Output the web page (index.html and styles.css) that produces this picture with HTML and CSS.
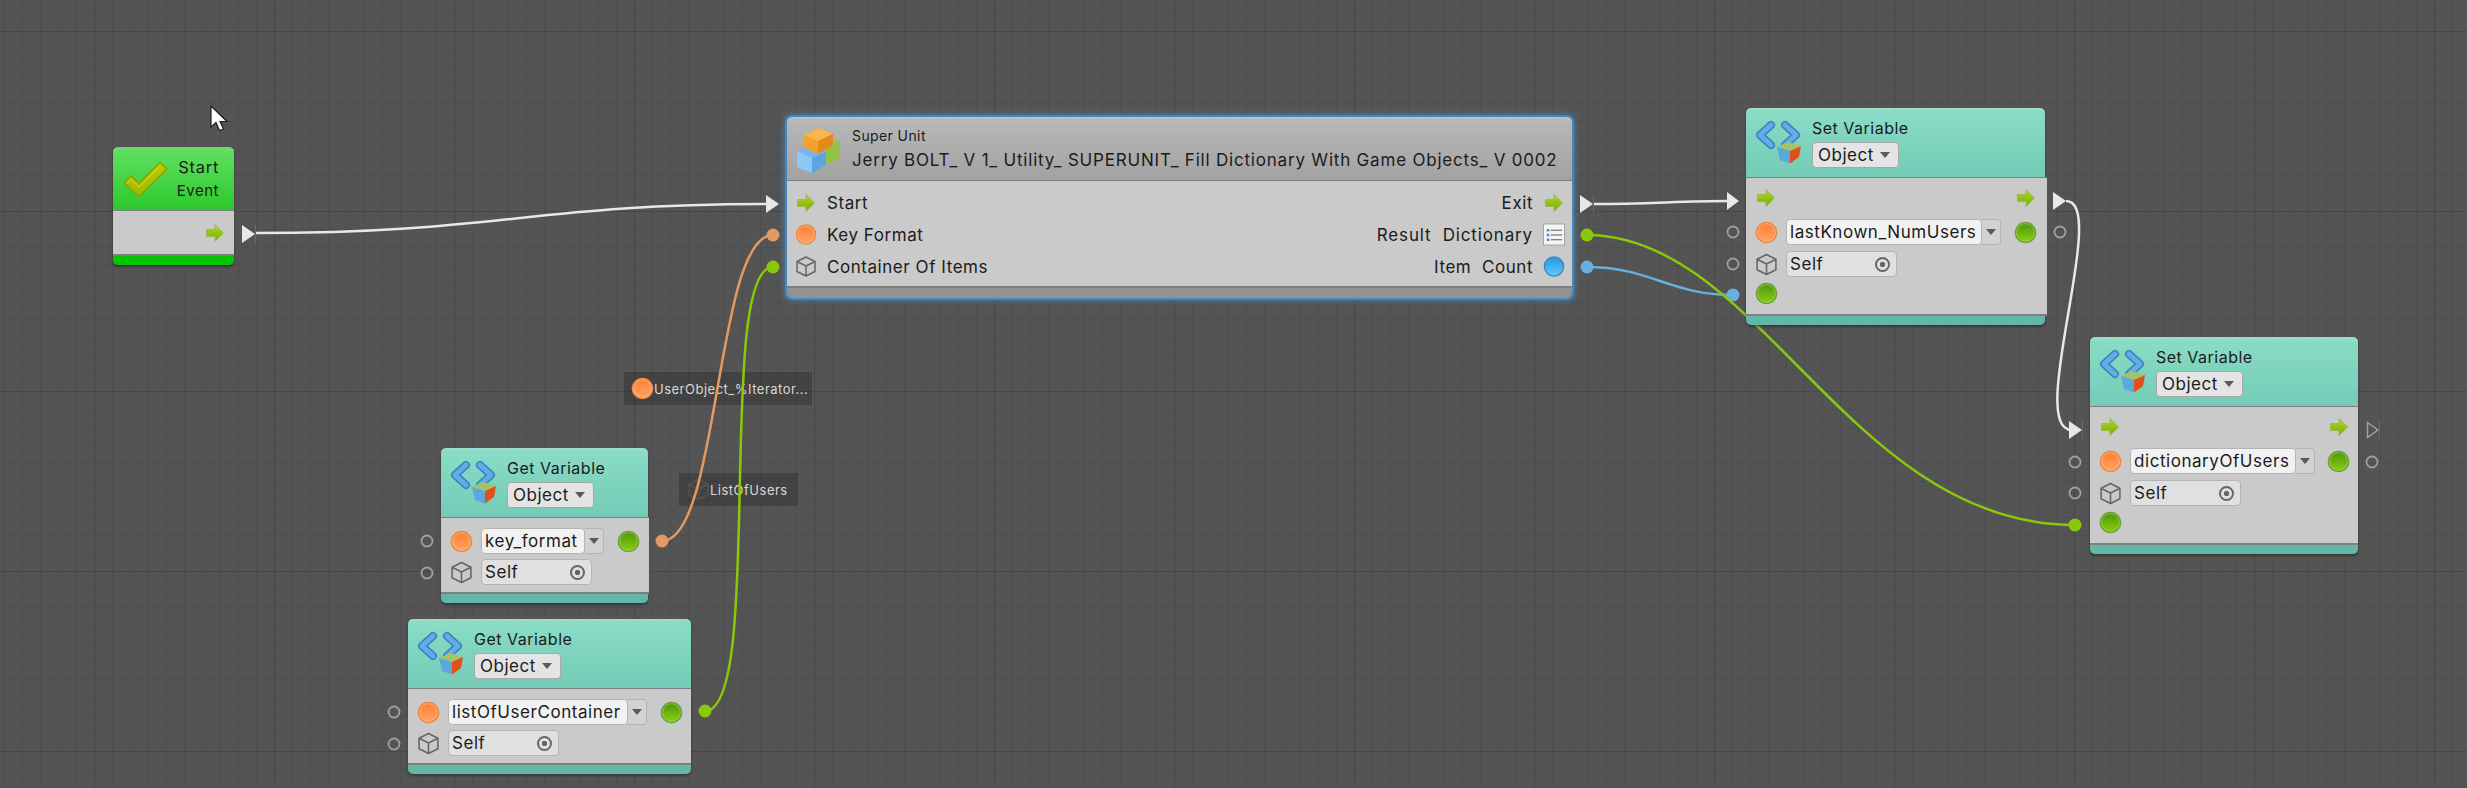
FILE: index.html
```html
<!DOCTYPE html>
<html lang="en">
<head>
    <meta charset="UTF-8">
    <title>Flow Graph</title>
    <link rel="stylesheet" href="styles.css">
</head>
<body>

<!-- shared icons -->
<svg class="defs" width="0" height="0">
    <defs>
        <linearGradient id="gFlow" x1="0" y1="0" x2="0" y2="1"><stop offset="0" stop-color="#b4d820"/><stop offset="1" stop-color="#76ac04"/></linearGradient>
        <linearGradient id="gOrange" x1="0" y1="0" x2="0" y2="1"><stop offset="0" stop-color="#ff7f30"/><stop offset="1" stop-color="#ffa468"/></linearGradient>
        <linearGradient id="gGreen" x1="0" y1="0" x2="0" y2="1"><stop offset="0" stop-color="#4c9406"/><stop offset="1" stop-color="#8ad018"/></linearGradient>
        <linearGradient id="gBlue" x1="0" y1="0" x2="0" y2="1"><stop offset="0" stop-color="#2196e6"/><stop offset="1" stop-color="#62ccff"/></linearGradient>
        <linearGradient id="gCheck" x1="0" y1="0" x2="0" y2="1"><stop offset="0" stop-color="#bccc00"/><stop offset="1" stop-color="#9cb800"/></linearGradient>
        <symbol id="flow" viewBox="0 0 20 20"><path d="M1.5 6.5H10V1.5L18.5 10L10 18.5V13.5H1.5Z" fill="url(#gFlow)" stroke="#9cb85c"/></symbol>
        <symbol id="orange" viewBox="0 0 24 24"><circle cx="12" cy="12" r="10.5" fill="url(#gOrange)" stroke="#e9883e" stroke-width="1.5"/><circle cx="12" cy="12" r="9.2" fill="none" stroke="#ffc79c" stroke-width=".6"/></symbol>
        <symbol id="green" viewBox="0 0 24 24"><circle cx="12" cy="12" r="10.5" fill="url(#gGreen)" stroke="#6f9f38" stroke-width="1.5"/><circle cx="12" cy="12" r="9.2" fill="none" stroke="#a6dc5c" stroke-width=".6"/></symbol>
        <symbol id="blue" viewBox="0 0 24 24"><circle cx="12" cy="12" r="10.5" fill="url(#gBlue)" stroke="#3a86bc" stroke-width="1.5"/></symbol>
        <symbol id="cube" viewBox="0 0 22 22"><path d="M11 1.5L20 6V16L11 20.5L2 16V6ZM2 6L11 10.5L20 6M11 10.5V20.5" fill="none" stroke="#666" stroke-width="1.5" stroke-linejoin="round"/></symbol>
        <symbol id="var" viewBox="0 0 46 44">
            <path d="M16 5L5 15L16 25M30 5L41 15L30 25" fill="none" stroke="#3a82c2" stroke-width="8" stroke-linejoin="round" stroke-linecap="round"/>
            <path d="M16 5L5 15L16 25M30 5L41 15L30 25" fill="none" stroke="#62ade6" stroke-width="5" stroke-linejoin="round" stroke-linecap="round"/>
            <path d="M22 27L33 22L46 26L35 31Z" fill="#a4c268"/>
            <path d="M22 27L35 31V43.5L25 40Z" fill="#5aa8dc"/>
            <path d="M35 31L46 26L44 37L35 43.5Z" fill="#e0501a"/>
        </symbol>
    </defs>
</svg>

<div class="canvas">

    <!-- inline value boxes, they sit under the wires -->
    <div class="inline-value inline-key">
        <svg class="ico ico-22"><use href="#orange"/></svg>
        <span class="inline-text">UserObject_%Iterator...</span>
    </div>
    <div class="inline-value inline-list">
        <svg class="ico ico-22 faded"><use href="#cube"/></svg>
        <span class="inline-text">ListOfUsers</span>
    </div>

    <!-- wires and connectors -->
    <svg class="wires" width="2467" height="788">
        <g fill="none" stroke-width="2.500">
            <path d="M255 233C500 233 530 204 770 204" stroke="#e8e8e8"/>
            <path d="M1593 204C1650 204 1680 201 1730 201" stroke="#e8e8e8"/>
            <path d="M2066 201C2110 201 2025 430 2072 430" stroke="#e8e8e8"/>
            <path d="M662 541C720 541 715 235 773 235" stroke="#e39a62"/>
            <path d="M705 711C765 711 715 267 773 267" stroke="#8ac80a"/>
            <path d="M1587 267C1650 267 1670 295 1733 295" stroke="#68aee0"/>
        </g>
        <g fill="#e39a62"><circle cx="773" cy="235" r="6.5"/><circle cx="662" cy="541" r="6.5"/></g>
        <circle cx="1733" cy="295" r="6.5" fill="#68aee0"/>
        <circle cx="1587" cy="267" r="6.5" fill="#68aee0"/>
        <path d="M1587 235C1760 235 1850 525 2075 525" fill="none" stroke="#8ac80a" stroke-width="2.500"/>
        <g fill="#8ac80a">
            <circle cx="773" cy="267" r="6.5"/><circle cx="705" cy="711" r="6.5"/>
            <circle cx="1587" cy="235" r="6.5"/><circle cx="2075" cy="525" r="6.5"/>
        </g>
        <g fill="#e8e8e8">
            <path d="M242 225L255 234L242 243Z"/>
            <path d="M766 195L779 204L766 213Z"/>
            <path d="M1580 195L1593 204L1580 213Z"/>
            <path d="M1727 192L1739 201L1727 210Z"/>
            <path d="M2053 192L2066 201L2053 210Z"/>
            <path d="M2069 421L2082 430L2069 439Z"/>
        </g>
        <path d="M255.500 225V243M1593.500 195V213M2082.500 421V439M2379.500 421V439" stroke="#6a6a6a" stroke-width="1"/>
        <path d="M2367.500 422.500L2378 430L2367.500 437.500Z" fill="none" stroke="#a0a0a0" stroke-width="1.500"/>
        <g fill="none" stroke="#a0a0a0" stroke-width="1.800">
            <circle cx="1733" cy="232" r="5.500"/><circle cx="1733" cy="264" r="5.500"/>
            <circle cx="2060" cy="232" r="5.500"/>
            <circle cx="2075" cy="462" r="5.500"/><circle cx="2075" cy="493" r="5.500"/>
            <circle cx="2372" cy="462" r="5.500"/>
            <circle cx="427" cy="541" r="5.500"/><circle cx="427" cy="573" r="5.500"/>
            <circle cx="394" cy="712" r="5.500"/><circle cx="394" cy="744" r="5.500"/>
        </g>
    </svg>

    <!-- Start event -->
    <div class="node node-start">
        <div class="head head-start">
            <svg class="check" viewBox="0 0 46 37">
                <path d="M2 22L9 15L17 22L38 1.500L45 8L17 35.500Z" fill="url(#gCheck)" stroke="#8ea000" stroke-width="1.500" stroke-linejoin="round"/>
                <path d="M5 22L9 18.500L17 26L38 5" fill="none" stroke="#d2dc40" stroke-width="1"/>
            </svg>
            <div class="start-titles">
                <div class="title title-start">Start</div>
                <div class="subtitle">Event</div>
            </div>
        </div>
        <div class="body body-start">
            <svg class="ico ico-flow"><use href="#flow"/></svg>
        </div>
        <div class="foot foot-start"></div>
    </div>

    <!-- Super unit -->
    <div class="node node-super">
        <div class="head head-super">
            <svg class="lego" viewBox="0 0 46 47">
                <path d="M30 16L45 13V31L30 38Z" fill="#94c244"/>
                <path d="M2 24L13 20L31 25V38L17 46L2 40Z" fill="#74b6ec"/>
                <path d="M17 31L31 25V38L17 46Z" fill="#5ea4de"/>
                <path d="M2 24L17 31V46L2 40Z" fill="#8cc8f4"/>
                <path d="M9 8L24 1L38 7L38 18L22 27L9 20Z" fill="#f2a030"/>
                <path d="M9 8L24 1L38 7L23 14Z" fill="#f8b64c"/>
                <path d="M23 14L38 7V18L23 27Z" fill="#e28a1c"/>
            </svg>
            <div class="super-titles">
                <div class="super-label">Super Unit</div>
                <div class="super-name">Jerry BOLT_ V 1_ Utility_ SUPERUNIT_ Fill Dictionary With Game Objects_ V 0002</div>
            </div>
        </div>
        <div class="body body-super">
            <div class="ports">
                <div class="port"><svg class="ico ico-flow"><use href="#flow"/></svg><span>Start</span></div>
                <div class="port"><svg class="ico ico-22"><use href="#orange"/></svg><span>Key Format</span></div>
                <div class="port"><svg class="ico ico-22"><use href="#cube"/></svg><span>Container Of Items</span></div>
            </div>
            <div class="ports ports-right">
                <div class="port"><span>Exit</span><svg class="ico ico-flow"><use href="#flow"/></svg></div>
                <div class="port"><span class="port-wide">Result&nbsp; Dictionary</span>
                    <svg class="ico ico-22" viewBox="0 0 23 23">
                        <rect x=".5" y=".5" width="22" height="22" fill="#f4f4f4" stroke="#a0a0a0"/>
                        <path d="M8 7H20M8 12H20M8 17H20" stroke="#555" stroke-width="1"/>
                        <path d="M4 7H6.500M4 12H6.500M4 17H6.500" stroke="#3f8fd8" stroke-width="2.500"/>
                    </svg>
                </div>
                <div class="port"><span>Item&nbsp; Count</span><svg class="ico ico-22"><use href="#blue"/></svg></div>
            </div>
        </div>
        <div class="foot foot-super"></div>
    </div>

    <!-- Set Variable, lastKnown_NumUsers -->
    <div class="node node-set1">
        <div class="head head-var">
            <svg class="var-icon"><use href="#var"/></svg>
            <div class="var-titles">
                <div class="title">Set Variable</div>
                <div class="pick">Object<i class="caret"></i></div>
            </div>
        </div>
        <div class="body body-var">
            <div class="row row-flow"><svg class="ico ico-flow"><use href="#flow"/></svg><svg class="ico ico-flow end"><use href="#flow"/></svg></div>
            <div class="row"><svg class="ico ico-22"><use href="#orange"/></svg>
                <div class="combo combo-last"><span class="combo-text">lastKnown_NumUsers</span><span class="combo-arrow"><i class="caret"></i></span></div>
                <svg class="ico ico-22 end"><use href="#green"/></svg></div>
            <div class="row"><svg class="ico ico-22"><use href="#cube"/></svg><div class="self">Self<i class="target"></i></div></div>
            <div class="row row-icon"><svg class="ico ico-22"><use href="#green"/></svg></div>
        </div>
        <div class="foot foot-var"></div>
    </div>

    <!-- Set Variable, dictionaryOfUsers -->
    <div class="node node-set2">
        <div class="head head-var">
            <svg class="var-icon"><use href="#var"/></svg>
            <div class="var-titles">
                <div class="title">Set Variable</div>
                <div class="pick">Object<i class="caret"></i></div>
            </div>
        </div>
        <div class="body body-var">
            <div class="row row-flow"><svg class="ico ico-flow"><use href="#flow"/></svg><svg class="ico ico-flow end"><use href="#flow"/></svg></div>
            <div class="row"><svg class="ico ico-22"><use href="#orange"/></svg>
                <div class="combo combo-dict"><span class="combo-text">dictionaryOfUsers</span><span class="combo-arrow"><i class="caret"></i></span></div>
                <svg class="ico ico-22 end"><use href="#green"/></svg></div>
            <div class="row"><svg class="ico ico-22"><use href="#cube"/></svg><div class="self">Self<i class="target"></i></div></div>
            <div class="row row-icon"><svg class="ico ico-22"><use href="#green"/></svg></div>
        </div>
        <div class="foot foot-var"></div>
    </div>

    <!-- Get Variable, key_format -->
    <div class="node node-get1">
        <div class="head head-var">
            <svg class="var-icon"><use href="#var"/></svg>
            <div class="var-titles">
                <div class="title">Get Variable</div>
                <div class="pick">Object<i class="caret"></i></div>
            </div>
        </div>
        <div class="body body-get">
            <div class="row"><svg class="ico ico-22"><use href="#orange"/></svg>
                <div class="combo combo-key"><span class="combo-text">key_format</span><span class="combo-arrow"><i class="caret"></i></span></div>
                <svg class="ico ico-22 end"><use href="#green"/></svg></div>
            <div class="row"><svg class="ico ico-22"><use href="#cube"/></svg><div class="self">Self<i class="target"></i></div></div>
        </div>
        <div class="foot foot-var"></div>
    </div>

    <!-- Get Variable, listOfUserContainer -->
    <div class="node node-get2">
        <div class="head head-var">
            <svg class="var-icon"><use href="#var"/></svg>
            <div class="var-titles">
                <div class="title">Get Variable</div>
                <div class="pick">Object<i class="caret"></i></div>
            </div>
        </div>
        <div class="body body-get">
            <div class="row"><svg class="ico ico-22"><use href="#orange"/></svg>
                <div class="combo combo-list"><span class="combo-text">listOfUserContainer</span><span class="combo-arrow"><i class="caret"></i></span></div>
                <svg class="ico ico-22 end"><use href="#green"/></svg></div>
            <div class="row"><svg class="ico ico-22"><use href="#cube"/></svg><div class="self">Self<i class="target"></i></div></div>
        </div>
        <div class="foot foot-var"></div>
    </div>

    <!-- mouse pointer -->
    <svg class="pointer" viewBox="0 0 20 28"><path d="M1 1V22L6 17.500L9.500 25.500L13.500 24L10 16.500H17Z" fill="#fff" stroke="#1e1e28" stroke-width="1.200"/></svg>

</div>

</body>
</html>
```

FILE: styles.css
```css
html, body {
    margin: 0;
    padding: 0;
}
body {
    font-family: Inter, "Liberation Sans", sans-serif;
    background-color: #545454;
    overflow: hidden;
}
.defs {
    position: absolute;
}

/* graph background */
.canvas {
    position: relative;
    width: 2467px;
    height: 788px;
    overflow: hidden;
    background-color: #545454;
    background-image:
        linear-gradient(to right, #474747 1px, transparent 1px),
        linear-gradient(to bottom, #474747 1px, transparent 1px),
        linear-gradient(to right, #4e4e4e 1px, transparent 1px),
        linear-gradient(to bottom, #4e4e4e 1px, transparent 1px);
    background-size: 180px 180px, 180px 180px, 18px 18px, 18px 18px;
    background-position: 94px 0, 0 31px, 4px 0, 0 13px;
}
.wires {
    position: absolute;
    left: 0;
    top: 0;
}
.pointer {
    position: absolute;
    left: 210px;
    top: 105px;
    width: 20px;
    height: 28px;
}

/* inline value boxes */
.inline-value {
    position: absolute;
    display: flex;
    align-items: center;
    height: 33px;
    background-color: rgba(0, 0, 0, .2);
    color: #d8d8d8;
    font-size: 13px;
    letter-spacing: .5px;
}
.inline-key {
    left: 624px;
    top: 372px;
    width: 188px;
    padding-left: 7px;
    box-sizing: border-box;
}
.inline-list {
    left: 679px;
    top: 473px;
    width: 119px;
    padding-left: 8px;
    box-sizing: border-box;
}
.faded {
    opacity: .45;
}

/* nodes */
.node {
    position: absolute;
    display: flex;
    flex-direction: column;
    border-radius: 5px;
    box-shadow: 0 2px 3px rgba(0, 0, 0, .35);
    color: #1b1b1b;
    font-size: 17px;
}
.node-start { left: 113px; top: 147px; width: 121px; }
.node-super {
    left: 787px;
    top: 117px;
    width: 785px;
    box-shadow: 0 0 0 2px #3f88c8, 0 0 6px 3px rgba(80, 160, 225, .45);
}
.node-set1 { left: 1746px; top: 108px; width: 299px; }
.node-set2 { left: 2090px; top: 337px; width: 268px; }
.node-get1 { left: 441px; top: 448px; width: 207px; }
.node-get2 { left: 408px; top: 619px; width: 283px; }

/* these two have a body a little wider than the header */
.node-set1 .body {
    margin-right: -2px;
    padding-right: 10px;
}
.node-get1 .body {
    margin-right: -1px;
    padding-right: 9px;
}

.head {
    display: flex;
    box-sizing: border-box;
    border-radius: 5px 5px 0 0;
    border-top: 2px solid rgba(255, 255, 255, .3);
}
.head-start {
    height: 63px;
    padding: 8px 15px 0 9px;
    justify-content: space-between;
    background: linear-gradient(#60e060, #2cc82c);
}
.head-super {
    height: 63px;
    padding: 8px 0 0 8px;
    background: linear-gradient(#b8b8b8, #a2a2a2);
}
.head-var {
    height: 69px;
    padding: 10px 0 0 9px;
    background: linear-gradient(#8adcc6, #74cbb6);
}
.body {
    background-color: #cacaca;
    border-top: 1px solid #7e7e7e;
    border-bottom: 2px solid #7e7e7e;
    box-sizing: border-box;
}
.foot {
    border-radius: 0 0 5px 5px;
}
.foot-start { height: 9px; background-color: #04c404; }
.foot-super { height: 10px; background-color: #929292; }
.foot-var { height: 9px; background-color: #62b7a9; }

.title {
    font-size: 16px;
    line-height: 20px;
    letter-spacing: .5px;
}
.title-start {
    font-size: 16.5px;
    letter-spacing: .7px;
}
.subtitle {
    font-size: 15px;
    line-height: 20px;
    margin-top: 4px;
    text-align: right;
    letter-spacing: .5px;
}
.check {
    width: 46px;
    height: 37px;
    margin-top: 4px;
}
.start-titles {
    text-align: right;
}
.body-start {
    height: 46px;
    display: flex;
    align-items: center;
    justify-content: flex-end;
    padding-right: 8px;
}

/* super unit */
.lego {
    width: 46px;
    height: 47px;
}
.super-titles {
    margin-left: 11px;
}
.super-label {
    font-size: 14px;
    line-height: 18px;
    letter-spacing: .4px;
}
.super-name {
    font-size: 17px;
    line-height: 22px;
    margin-top: 4px;
    letter-spacing: .8px;
    white-space: nowrap;
}
.body-super {
    height: 108px;
    display: flex;
    justify-content: space-between;
    padding: 8px 7px 0 8px;
}
.ports {
    display: flex;
    flex-direction: column;
    gap: 5px;
}
.ports-right {
    align-items: flex-end;
}
.port {
    display: flex;
    align-items: center;
    gap: 10px;
    height: 27px;
    letter-spacing: .55px;
}
.port-wide {
    letter-spacing: .85px;
}
.port .ico {
    width: 22px;
}

/* variable nodes */
.var-icon {
    width: 46px;
    height: 44px;
}
.var-titles {
    margin-left: 11px;
    margin-top: -2px;
}
.pick {
    display: inline-flex;
    align-items: center;
    gap: 6px;
    box-sizing: border-box;
    height: 26px;
    margin-top: 4px;
    padding: 0 8px 0 5px;
    background-color: #e4e4e4;
    border: 1px solid #a8a8a8;
    border-radius: 4px;
    font-size: 17px;
    letter-spacing: .5px;
}
.caret {
    width: 0;
    height: 0;
    border-left: 5px solid transparent;
    border-right: 5px solid transparent;
    border-top: 6px solid #5a5a5a;
}
.body-var {
    height: 139px;
    display: flex;
    flex-direction: column;
    gap: 6px;
    padding: 7px 8px 0 9px;
}
.body-get {
    height: 77px;
    display: flex;
    flex-direction: column;
    gap: 5px;
    padding: 10px 8px 0 9px;
}
.row {
    display: flex;
    align-items: center;
    gap: 8px;
    height: 26px;
    flex: none;
}
.row-flow {
    margin-bottom: 2px;
}
.row-icon {
    height: 20px;
}
.end {
    margin-left: auto;
}
.combo {
    display: flex;
    height: 26px;
    letter-spacing: .55px;
}
.combo-text {
    display: flex;
    align-items: center;
    box-sizing: border-box;
    padding-left: 3px;
    background-color: #f2f2f2;
    border: 1px solid #b4b4b4;
    border-radius: 4px;
    white-space: nowrap;
    overflow: hidden;
}
.combo-arrow {
    display: flex;
    align-items: center;
    justify-content: center;
    box-sizing: border-box;
    width: 19px;
    background-color: #d2d2d2;
    border: 1px solid #b4b4b4;
    border-left: 0;
    border-radius: 0 4px 4px 0;
}
.combo-last .combo-text { width: 196px; }
.combo-dict .combo-text { width: 166px; }
.combo-key .combo-text { width: 104px; }
.combo-list .combo-text { width: 180px; }
.self {
    display: flex;
    align-items: center;
    justify-content: space-between;
    box-sizing: border-box;
    width: 111px;
    height: 26px;
    padding: 0 6px 0 3px;
    background-color: #e0e0e0;
    border: 1px solid #b4b4b4;
    border-radius: 4px;
    letter-spacing: .55px;
}
.target {
    box-sizing: border-box;
    width: 15px;
    height: 15px;
    border: 2px solid #666;
    border-radius: 50%;
    background: radial-gradient(circle, #666 0 2.5px, transparent 3px);
}

/* icons */
.ico {
    flex: none;
}
.ico-22 {
    width: 23px;
    height: 23px;
}
.ico-flow {
    width: 22px;
    height: 20px;
}
```
